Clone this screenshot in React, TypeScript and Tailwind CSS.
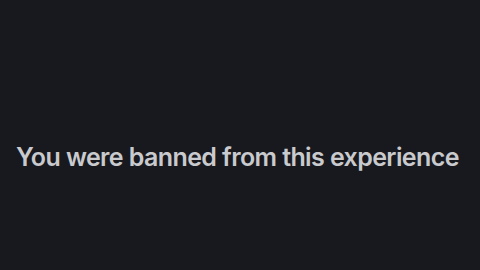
export default function App() {
  return (
    <div className="flex h-[270px] w-[480px] items-center justify-center bg-[#18191e] pr-[5px]">
      <p
        className="mt-[44px] text-[25px] leading-none font-semibold tracking-[-0.6px] text-[#c9cacd]"
        style={{ fontFamily: 'Inter, "Noto Sans", sans-serif' }}
      >
        You were banned from this experience
      </p>
    </div>
  );
}
